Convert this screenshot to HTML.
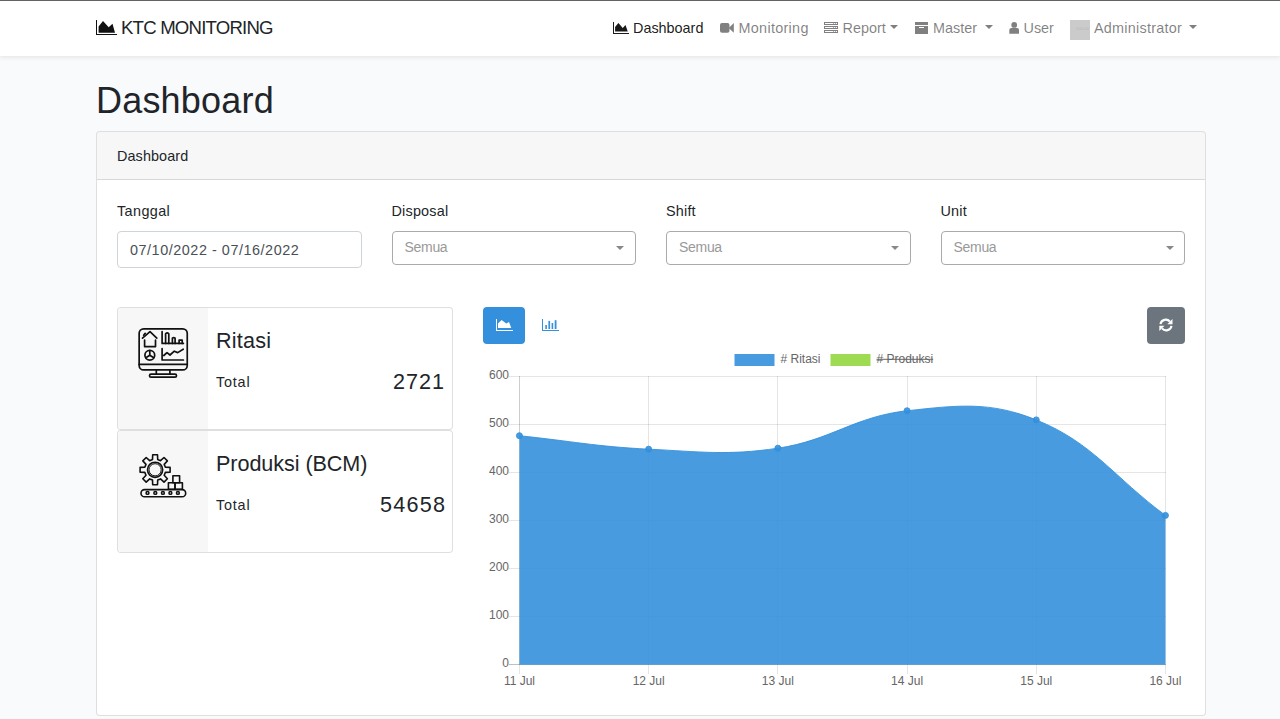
<!DOCTYPE html>
<html><head><meta charset="utf-8">
<style>
*{box-sizing:border-box;margin:0;padding:0}
html,body{width:1280px;height:719px;overflow:hidden}
body{background:#f8fafc;font-family:"Liberation Sans",sans-serif;color:#212529;position:relative}
.a{position:absolute;white-space:nowrap}
.t{position:absolute;white-space:nowrap;line-height:1}
#topline{position:absolute;left:0;top:0;width:1280px;height:1px;background:#646464}
#nav{position:absolute;left:0;top:1px;width:1280px;height:55px;background:#fff;box-shadow:0 2px 4px rgba(0,0,0,.075)}
.nl{color:rgba(0,0,0,.5);font-size:14.4px}
.caret{position:absolute;width:0;height:0;border-left:4.32px solid transparent;border-right:4.32px solid transparent;border-top:4.32px solid rgba(0,0,0,.5)}
#card{position:absolute;left:96px;top:131px;width:1110px;height:585px;background:#fff;border:1px solid rgba(0,0,0,.125);border-radius:4px;overflow:hidden}
#chead{position:absolute;left:0;top:0;width:1108px;height:48px;background:rgba(0,0,0,.03);border-bottom:1px solid rgba(0,0,0,.125)}
.inp{position:absolute;background:#fff;border:1px solid #ced4da;border-radius:4px}
.sel{position:absolute;background:#fff;border:1px solid #aaa;border-radius:4px}
.sarrow{position:absolute;width:0;height:0;border-left:4px solid transparent;border-right:4px solid transparent;border-top:4.5px solid #888}
.stat{position:absolute;left:117px;width:336px;background:#fff;border:1px solid rgba(0,0,0,.125);border-radius:4px;overflow:hidden}
.stat .side{position:absolute;left:0;top:0;width:90px;height:100%;background:#f7f7f7}
</style></head>
<body>
<div id="topline"></div>
<div id="nav">
  <!-- brand icon -->
  <svg class="a" style="left:95px;top:18px" width="24" height="18" viewBox="0 0 24 18">
    <path d="M1.5 0.8 V15.5 H21.5" fill="none" stroke="#111" stroke-width="1" shape-rendering="crispEdges"/>
    <path d="M3.6 13.7 V7.4 L8 2 L13.7 8.3 L17.5 4.8 L20 13.7 Z" fill="#111"/>
  </svg>
  <div class="t" style="left:121px;top:18px;font-size:18.6px;letter-spacing:-0.8px;color:#212529">KTC MONITORING</div>

  <!-- nav items -->
  <svg class="a" style="left:612px;top:19px" width="18" height="15" viewBox="0 0 18 15">
    <path d="M1.5 1.9 V13.5 H17" fill="none" stroke="#1a1a1a" stroke-width="1" shape-rendering="crispEdges"/>
    <path d="M3.1 11.6 V7 L6.4 3 L10.75 7.9 L13.5 5.1 L15.75 11.6 Z" fill="#1a1a1a"/>
  </svg>
  <div class="t" style="left:633px;top:19.5px;font-size:14.4px;color:rgba(0,0,0,.9)">Dashboard</div>

  <svg class="a" style="left:719px;top:21px" width="16" height="12" viewBox="0 0 16 12">
    <rect x="1" y="0.9" width="9.5" height="9.9" rx="2" fill="#808080"/>
    <path d="M9.8 5.9 L14.8 1 V10.8 Z" fill="#808080"/>
  </svg>
  <div class="t nl" style="left:738.5px;top:19.5px;letter-spacing:0.3px">Monitoring</div>

  <svg class="a" style="left:823px;top:20px" width="16" height="13" viewBox="0 0 16 13">
    <g fill="none" stroke="#808080" stroke-width="1" shape-rendering="crispEdges">
      <rect x="1.5" y="1.5" width="13" height="2"/>
      <rect x="1.5" y="5.5" width="13" height="2"/>
      <rect x="1.5" y="9.5" width="13" height="2"/>
    </g>
    <g fill="#b0b0b0"><rect x="10" y="2" width="1" height="1"/><rect x="12" y="2" width="1" height="1"/><rect x="10" y="6" width="1" height="1"/><rect x="12" y="6" width="1" height="1"/><rect x="10" y="10" width="1" height="1"/><rect x="12" y="10" width="1" height="1"/></g>
  </svg>
  <div class="t nl" style="left:842.5px;top:19.5px">Report</div>
  <div class="caret" style="left:890px;top:24px"></div>

  <svg class="a" style="left:914px;top:20px" width="16" height="14" viewBox="0 0 16 14">
    <g shape-rendering="crispEdges"><rect x="1" y="1" width="13" height="3" fill="#808080"/>
    <rect x="1" y="5" width="13" height="8" fill="#808080"/>
    <rect x="5" y="6" width="5" height="1" fill="#fff"/></g>
  </svg>
  <div class="t nl" style="left:933px;top:19.5px">Master</div>
  <div class="caret" style="left:984.5px;top:24px"></div>

  <svg class="a" style="left:1008px;top:20px" width="13" height="14" viewBox="0 0 13 14">
    <circle cx="6.2" cy="3.9" r="2.9" fill="#808080"/>
    <path d="M1.3 12.75 V9.1 Q1.3 7.1 3.3 7.1 H9.1 Q11 7.1 11 9.1 V12.75 Z" fill="#808080"/>
  </svg>
  <div class="t nl" style="left:1023.5px;top:19.5px">User</div>

  <div class="a" style="left:1070px;top:19px;width:20px;height:20px;background:#cbcbcb"><div class="t" style="left:5.5px;top:8px;font-size:3.5px;color:#b8b8b8">100x100</div></div>
  <div class="t nl" style="left:1094px;top:19.5px;letter-spacing:0.25px">Administrator</div>
  <div class="caret" style="left:1189px;top:24px"></div>
</div>

<div class="t" style="left:96px;top:83px;font-size:36px;letter-spacing:0.2px;color:#212529">Dashboard</div>

<div id="card">
  <div id="chead"></div>
  <div class="t" style="left:20px;top:16.5px;font-size:14.4px;letter-spacing:0.1px">Dashboard</div>
</div>

<!-- filters -->
<div class="t" style="left:117px;top:204px;font-size:14.4px;letter-spacing:0.4px">Tanggal</div>
<div class="inp" style="left:117px;top:231px;width:245px;height:37px"></div>
<div class="t" style="left:130px;top:243px;font-size:14.4px;color:#495057;letter-spacing:0.54px">07/10/2022 - 07/16/2022</div>

<div class="t" style="left:391.5px;top:204px;font-size:14.4px;letter-spacing:0.2px">Disposal</div>
<div class="sel" style="left:392px;top:231px;width:244px;height:34px"></div>
<div class="t" style="left:404.5px;top:240px;font-size:14px;color:#999;letter-spacing:-0.3px">Semua</div>
<div class="sarrow" style="left:616px;top:245.5px"></div>

<div class="t" style="left:666px;top:204px;font-size:14.4px;letter-spacing:0.2px">Shift</div>
<div class="sel" style="left:666px;top:231px;width:245px;height:34px"></div>
<div class="t" style="left:679px;top:240px;font-size:14px;color:#999;letter-spacing:-0.3px">Semua</div>
<div class="sarrow" style="left:891px;top:245.5px"></div>

<div class="t" style="left:940.5px;top:204px;font-size:14.4px;letter-spacing:0.2px">Unit</div>
<div class="sel" style="left:941px;top:231px;width:244px;height:34px"></div>
<div class="t" style="left:953.5px;top:240px;font-size:14px;color:#999;letter-spacing:-0.3px">Semua</div>
<div class="sarrow" style="left:1165.5px;top:245.5px"></div>

<!-- stat cards -->
<div class="stat" style="top:307px;height:123px"><div class="side"></div></div>
<div class="stat" style="top:430px;height:123px"><div class="side"></div></div>

<svg class="a" style="left:130px;top:320px" width="70" height="70" viewBox="0 0 70 70">
  <g fill="none" stroke="#111" stroke-width="1.7" stroke-linecap="round" stroke-linejoin="round">
    <rect x="9.15" y="8.86" width="48.1" height="41.1" rx="4.5"/>
    <line x1="9.15" y1="44.3" x2="57.25" y2="44.3"/>
    <path d="M26.3 50 V54.2 M39.9 50 V54.2"/>
    <rect x="19.5" y="54.2" width="27" height="3" rx="1.5"/>
    <path d="M14.6 20 V26.6 H25.5 V20"/>
    <path d="M12.5 18.2 L20 11.6 L26.8 18.2"/>
    <path d="M13.6 15.2 L15.2 13.4"/>
    <circle cx="19.8" cy="35.2" r="4.9"/>
    <path d="M19.8 35.2 V30.5 M19.8 35.2 L15.8 37.8 M19.8 35.2 L23.8 37.8"/>
    <path d="M32.1 11.7 V23.4 H53.4"/>
    <path d="M35.6 23.4 V13.8 Q37.2 12.2 38.8 13.8 V23.4"/>
    <path d="M42.4 23.4 V18.2 Q43.7 17 45.1 18.2 V23.4"/>
    <path d="M49.1 23.4 V20.2 H52.2 V23.4"/>
    <path d="M32.1 28.5 V40 H53.4"/>
    <path d="M33.8 35.5 L37 32.6 L40 35 L44.3 31.2 L47.7 32.6 L53.2 29.2"/>
  </g>
</svg>

<svg class="a" style="left:130px;top:445px" width="70" height="70" viewBox="0 0 70 70">
  <g fill="none" stroke="#111" stroke-width="1.6" stroke-linejoin="round">
    <path d="M22.50 14.52 L22.70 9.80 L27.50 9.80 L27.70 14.52 L30.53 15.70 L34.01 12.50 L37.40 15.89 L34.20 19.37 L35.38 22.20 L40.10 22.40 L40.10 27.20 L35.38 27.40 L34.20 30.23 L37.40 33.71 L34.01 37.10 L30.53 33.90 L27.70 35.08 L27.50 39.80 L22.70 39.80 L22.50 35.08 L19.67 33.90 L16.19 37.10 L12.80 33.71 L16.00 30.23 L14.82 27.40 L10.10 27.20 L10.10 22.40 L14.82 22.20 L16.00 19.37 L12.80 15.89 L16.19 12.50 L19.67 15.70 Z"/>
    <circle cx="25.1" cy="24.8" r="7.6"/>
    <circle cx="25.1" cy="24.8" r="6.1" stroke-width="1"/>
    <rect x="11" y="44.6" width="44.7" height="7.2" rx="3.6"/>
    <circle cx="17.5" cy="47.9" r="1.4"/>
    <circle cx="25.3" cy="47.9" r="1.4"/>
    <circle cx="32.9" cy="47.9" r="1.4"/>
    <circle cx="40.4" cy="47.9" r="1.4"/>
    <circle cx="47.9" cy="47.9" r="1.4"/>
    <rect x="38.4" y="37.8" width="6.6" height="6.4"/>
    <rect x="45" y="37.8" width="7.4" height="6.4"/>
    <rect x="42.9" y="30.8" width="6.7" height="7"/>
  </g>
</svg>

<div class="t" style="left:216px;top:329.5px;font-size:21.6px;letter-spacing:0.2px">Ritasi</div>
<div class="t" style="left:216px;top:375px;font-size:14.4px;letter-spacing:0.8px">Total</div>
<div class="t" style="left:393px;top:371px;font-size:21.6px;letter-spacing:1px">2721</div>

<div class="t" style="left:216px;top:452.5px;font-size:21.6px;letter-spacing:-0.07px">Produksi (BCM)</div>
<div class="t" style="left:216px;top:498px;font-size:14.4px;letter-spacing:0.8px">Total</div>
<div class="t" style="left:380px;top:494px;font-size:21.6px;letter-spacing:1.25px">54658</div>

<!-- chart buttons -->
<div class="a" style="left:483px;top:307px;width:42px;height:37px;background:#3490dc;border-radius:4px"></div>
<svg class="a" style="left:495px;top:318px" width="19" height="14" viewBox="0 0 19 14">
  <path d="M1.5 1 V12.5 H18" fill="none" stroke="#fff" stroke-width="1" shape-rendering="crispEdges"/>
  <path d="M3 10 V5.4 L6.6 1.9 L11.25 5.4 L14 3.9 L16.3 10 Z" fill="#fff"/>
</svg>
<svg class="a" style="left:541px;top:318px" width="19" height="14" viewBox="0 0 19 14">
  <path d="M1.5 1 V12.5 H17.75" fill="none" stroke="#3490dc" stroke-width="1" shape-rendering="crispEdges"/>
  <g fill="#3490dc">
  <rect x="4.3" y="7" width="1.6" height="4"/>
  <rect x="7.4" y="2.9" width="1.7" height="8.1"/>
  <rect x="10.6" y="5" width="1.6" height="6"/>
  <rect x="13.7" y="2.2" width="1.8" height="8.8"/>
  </g>
</svg>
<div class="a" style="left:1147px;top:307px;width:38px;height:37px;background:#6c757d;border-radius:4px"></div>
<svg class="a" style="left:1158px;top:318px" width="16" height="15" viewBox="0 0 16 15">
  <path d="M2.5 6.2 A5.3 5.3 0 0 1 11.9 3.7" fill="none" stroke="#fff" stroke-width="2.1"/>
  <path d="M14.5 1 V6.2 H9.3 Z" fill="#fff"/>
  <path d="M13.5 7.8 A5.3 5.3 0 0 1 4.1 10.3" fill="none" stroke="#fff" stroke-width="2.1"/>
  <path d="M1.3 13 V7.8 H6.5 Z" fill="#fff"/>
</svg>

<!-- chart -->
<svg class="a" style="left:0;top:0" width="1280" height="719" viewBox="0 0 1280 719">
  <g stroke="rgba(0,0,0,0.1)" stroke-width="1" fill="none" shape-rendering="crispEdges">
    <path d="M509 376.5 H1166 M509 424.5 H1166 M509 472.5 H1166 M509 520.5 H1166 M509 568.5 H1166 M509 616.5 H1166"/>
    <path d="M519.5 376 V674 M648.5 376 V674 M777.5 376 V674 M907.5 376 V674 M1036.5 376 V674 M1165.5 376 V674"/>
    <path d="M519.5 376 V665"/>
  </g>
  <path d="M509 664.5 H1166" stroke="rgba(0,0,0,0.25)" stroke-width="1" shape-rendering="crispEdges"/>
  <path d="M519.45 435.72 C571.13 441.10 596.83 446.66 648.65 449.16 C700.19 451.65 727.21 455.73 777.85 448.20 C830.57 440.37 854.39 416.53 907.05 410.76 C957.75 405.20 990.12 401.20 1036.25 419.88 C1093.48 443.05 1113.77 477.19 1165.45 515.40 L1165.45 664.8 L519.45 664.8 Z" fill="rgba(52,144,220,0.9)"/>
  <path d="M519.45 435.72 C571.13 441.10 596.83 446.66 648.65 449.16 C700.19 451.65 727.21 455.73 777.85 448.20 C830.57 440.37 854.39 416.53 907.05 410.76 C957.75 405.20 990.12 401.20 1036.25 419.88 C1093.48 443.05 1113.77 477.19 1165.45 515.40" fill="none" stroke="rgba(52,144,220,0.9)" stroke-width="1"/>
  <g fill="rgba(52,144,220,0.9)" stroke="rgba(52,144,220,0.9)" stroke-width="1"><circle cx="519.45" cy="435.72" r="3"/><circle cx="648.65" cy="449.16" r="3"/><circle cx="777.85" cy="448.20" r="3"/><circle cx="907.05" cy="410.76" r="3"/><circle cx="1036.25" cy="419.88" r="3"/><circle cx="1165.45" cy="515.40" r="3"/></g>
  <g font-family="Liberation Sans" font-size="12" fill="#666" text-anchor="end">
    <text x="509" y="379">600</text>
    <text x="509" y="427">500</text>
    <text x="509" y="475">400</text>
    <text x="509" y="523">300</text>
    <text x="509" y="571">200</text>
    <text x="509" y="619">100</text>
    <text x="509" y="667">0</text>
  </g>
  <g font-family="Liberation Sans" font-size="12" fill="#666" text-anchor="middle"><text x="519.45" y="685">11 Jul</text><text x="648.65" y="685">12 Jul</text><text x="777.85" y="685">13 Jul</text><text x="907.05" y="685">14 Jul</text><text x="1036.25" y="685">15 Jul</text><text x="1165.45" y="685">16 Jul</text></g>
  <rect x="734.5" y="354" width="40" height="12" fill="rgba(52,144,220,0.9)"/>
  <text x="780.5" y="362.8" font-family="Liberation Sans" font-size="12" fill="#666"># Ritasi</text>
  <rect x="830.5" y="354" width="40" height="12" fill="rgba(149,215,63,0.9)"/>
  <text x="876.5" y="362.8" font-family="Liberation Sans" font-size="12" fill="#666"># Produksi</text>
  <path d="M876.5 359.3 H933.2" stroke="#666" stroke-width="1"/>
</svg>
</body></html>
